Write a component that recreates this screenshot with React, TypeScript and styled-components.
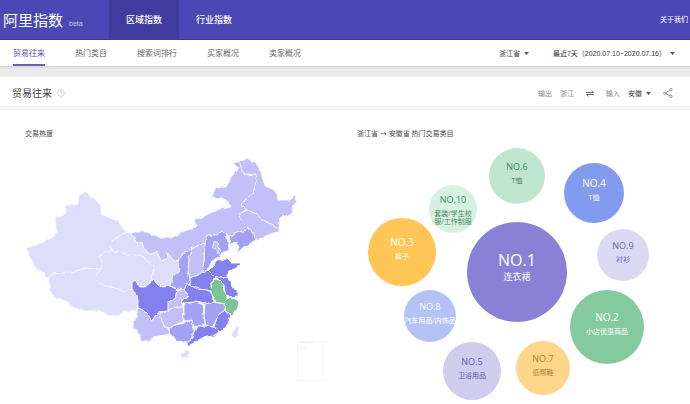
import React from "react";
import styled, { createGlobalStyle } from "styled-components";

const GlobalStyle = createGlobalStyle`
  * { box-sizing: border-box; }
  body {
    margin: 0;
    background: #fff;
    color: #444;
    font-family: "Open Sans", "Noto Sans CJK SC", sans-serif;
    font-size: 7px;
  }
  a { color: inherit; text-decoration: none; }
`;

const TopBar = styled.header`
  display: flex;
  align-items: stretch;
  height: 40px;
  background: #4b48b6;
  border-bottom: 1px solid #403c9c;
  color: #fff;
`;

const Logo = styled.a`
  display: flex;
  align-items: baseline;
  gap: 6px;
  width: 109px;
  padding: 0 0 0 3px;
  font-size: 15px;
  line-height: 41px;
  white-space: nowrap;
`;

const Beta = styled.small`
  color: #c5c3ee;
  font-family: "Liberation Sans", sans-serif;
  font-size: 7px;
`;

const MainNav = styled.nav`
  display: flex;
  flex: 1;
`;

const MainTab = styled.a<{ $active?: boolean }>`
  width: 70px;
  line-height: 39px;
  font-size: 9px;
  font-weight: 500;
  text-align: center;
  background: ${(p) => (p.$active ? "#403c9e" : "transparent")};
`;

const About = styled.a`
  padding-right: 2px;
  line-height: 39px;
`;

const SubBar = styled.div`
  display: flex;
  justify-content: space-between;
  height: 26px;
  padding: 0 15px 0 13px;
  background: #fff;
`;

const SubNav = styled.nav`
  display: flex;
  gap: 30px;
`;

const SubTab = styled.a<{ $active?: boolean }>`
  height: 26px;
  line-height: 25px;
  font-size: 8px;
  color: ${(p) => (p.$active ? "#5b54b4" : "#666")};
  border-bottom: 2px solid ${(p) => (p.$active ? "#6a63ae" : "transparent")};
`;

const Filters = styled.div`
  display: flex;
  align-items: center;
  gap: 24px;
  font-family: "Liberation Sans", "Noto Sans CJK SC", sans-serif;
`;

const SelectBox = styled.span`
  display: inline-flex;
  align-items: center;
  gap: 4px;
`;

const Select = styled.select`
  appearance: none;
  field-sizing: content;
  margin: 0;
  padding: 0;
  border: 0;
  background: transparent;
  color: #333;
  font: inherit;
`;

const Band = styled.div`
  height: 11px;
  background: linear-gradient(#d6d6d6, #ebebeb 3px);
`;

const TitleBar = styled.div`
  display: flex;
  align-items: center;
  justify-content: space-between;
  height: 33px;
  padding: 0 17px 0 12px;
  background: linear-gradient(#fff 29px, #efefef 29px, #efefef 30px, #fbfbfb 30px);
  border-bottom: 1px solid #f1f1f1;
`;

const TitleGroup = styled.div`
  display: flex;
  align-items: center;
  gap: 5px;
`;

const Title = styled.h1`
  margin: 0;
  font-size: 10px;
  line-height: 33px;
  font-weight: 400;
  color: #444;
`;

const Trade = styled.div`
  display: flex;
  align-items: center;
  gap: 12px;
  color: #888;
`;

const Pair = styled.span`
  display: inline-flex;
  align-items: center;
  gap: 8px;
`;

const IconButton = styled.button`
  display: inline-flex;
  margin: 0;
  padding: 0;
  border: 0;
  background: transparent;
  color: #444;
`;

const Board = styled.main`
  display: grid;
  grid-template-columns: 1fr 1fr;
  padding-top: 18px;
`;

const Panel = styled.section`
  min-width: 0;
`;

const PanelTitle = styled.h2<{ $inset: number }>`
  margin: 0;
  padding-left: ${(p) => p.$inset}px;
  font-size: 7px;
  line-height: 12px;
  font-weight: 400;
  color: #444;
`;

const Chart = styled.svg`
  display: block;
  width: 100%;
  height: auto;
`;

const Rank = styled.text<{ $size: number }>`
  font-size: ${(p) => p.$size}px;
  text-anchor: middle;
`;

function Caret() {
  return (
    <svg width="5" height="3" viewBox="0 0 5 3" aria-hidden="true">
      <path d="M0 0h5L2.5 3z" fill="#555" />
    </svg>
  );
}

function Picker({ label, value }: { label: string; value: string }) {
  return (
    <SelectBox>
      <Select aria-label={label} defaultValue={value}>
        <option>{value}</option>
      </Select>
      <Caret />
    </SelectBox>
  );
}

const TONES = {
  faint: "#dedefb",
  light: "#c1c0f8",
  mid: "#a3a1f4",
  strong: "#8481ee",
  chosen: "#7dc495",
};

const REGIONS: { id: string; tone: keyof typeof TONES; points: string }[] = [
  { id: "xinjiang", tone: "faint", points: "26,250 30,246 35,246 40,243 46,241 54,237 56,231 56,225 55,218 63,216 66,211 66,205 73,205 78,204 79,196 85,190 90,196 96,200 101,206 101,215 110,218 118,221 124,230 127,232 118,237 113,240 110,248 111,251 105,252 99,256 102,261 101,269 96,268 83,269 73,272 53,274 48,277 43,273 35,267 31,258" },
  { id: "xizang", tone: "faint", points: "48,277 53,274 73,272 83,269 96,268 101,269 96,275 98,282 106,286 116,288 126,292 132,288 135,293 138,300 137,310 131,311 123,311 120,315 110,316 98,310 86,311 75,309 66,301 56,298 49,291 50,283" },
  { id: "qinghai", tone: "faint", points: "101,269 102,261 99,256 105,252 113,250 121,252 128,255 140,255 148,261 154,266 153,275 150,283 145,287 139,286 135,281 132,282 132,288 126,292 116,288 106,286 98,282 96,275" },
  { id: "gansu", tone: "faint", points: "127,232 131,232 136,242 142,243 145,250 151,254 157,251 160,259 166,260 168,253 171,258 178,263 180,270 173,276 170,286 163,287 156,283 154,281 150,283 153,275 154,266 148,261 140,255 128,255 121,252 111,251 110,248 113,240 118,237" },
  { id: "neimenggu", tone: "light", points: "131,232 146,232 160,237 173,237 185,231 196,227 194,219 201,218 216,210 230,207 228,201 221,198 212,197 216,187 226,187 231,178 238,168 233,163 240,161 241,168 245,175 256,174 257,180 253,193 245,200 242,205 247,210 240,213 241,221 246,226 250,229 240,232 229,236 226,233 221,231 217,235 208,235 205,243 193,248 180,256 176,262 171,258 168,253 166,260 160,259 157,251 151,254 145,250 142,243 136,242" },
  { id: "heilongjiang", tone: "light", points: "240,161 248,159 256,163 261,173 265,186 276,191 278,200 290,200 296,195 295,203 290,215 280,217 279,228 273,225 263,220 256,214 247,210 242,205 245,200 253,193 257,180 256,174 245,175 241,168" },
  { id: "jilin", tone: "light", points: "247,210 256,214 263,220 273,225 279,228 279,231 271,234 263,237 256,240 252,230 246,226 241,221 240,213" },
  { id: "liaoning", tone: "mid", points: "250,229 252,230 256,240 246,246 237,253 239,247 236,243 230,245 229,236 240,232" },
  { id: "hebei", tone: "mid", points: "208,235 217,235 221,231 226,233 228,242 229,250 223,253 218,257 211,262 208,270 202,273 204,260 205,243" },
  { id: "beijing", tone: "light", points: "212,248 214,243 218,242 219,247 221,252 218,254 216,249" },
  { id: "shanxi", tone: "light", points: "193,248 205,243 204,260 202,273 190,278 188,272 189,258" },
  { id: "shaanxi", tone: "mid", points: "178,263 180,256 193,248 189,258 188,272 190,278 190,285 186,285 184,290 178,289 170,286 173,276 180,270" },
  { id: "shandong", tone: "strong", points: "211,268 218,260 228,259 231,263 242,263 238,267 230,271 226,277 215,277 208,271" },
  { id: "henan", tone: "strong", points: "190,278 202,273 208,270 215,277 211,283 212,292 206,290 198,289 190,285" },
  { id: "jiangsu", tone: "strong", points: "215,277 226,277 230,281 235,290 238,292 238,296 230,297 225,293 224,285 219,280" },
  { id: "anhui", tone: "chosen", points: "215,279 219,280 223,284 224,291 227,295 227,300 224,304 216,302 212,296 211,283" },
  { id: "zhejiang", tone: "chosen", points: "227,299 231,297 239,301 237,310 231,315 226,310 224,304" },
  { id: "hubei", tone: "strong", points: "184,290 186,285 190,285 198,289 206,290 212,292 212,296 214,302 205,304 196,302 183,303 181,300 188,297" },
  { id: "chongqing", tone: "light", points: "178,290 184,290 188,297 181,300 183,306 180,308 174,307 168,310 168,302 176,298" },
  { id: "sichuan", tone: "strong", points: "132,282 135,281 139,287 145,287 150,283 154,280 156,283 163,287 170,286 178,290 176,298 168,302 168,311 160,312 156,315 152,321 148,315 143,310 138,308 138,300 135,293 132,288" },
  { id: "yunnan", tone: "light", points: "138,308 143,310 148,315 152,321 156,315 160,312 162,321 166,327 170,334 160,336 153,337 149,343 141,340 138,331 132,328 135,320" },
  { id: "guizhou", tone: "light", points: "162,321 160,314 168,311 174,307 180,308 183,306 184,321 170,327 165,327" },
  { id: "guangxi", tone: "mid", points: "169,327 184,323 192,320 194,327 194,332 190,341 186,343 177,341 170,334" },
  { id: "hunan", tone: "mid", points: "184,304 196,302 203,305 205,324 194,327 192,320 184,321" },
  { id: "jiangxi", tone: "mid", points: "205,304 214,302 224,304 225,310 218,315 214,327 206,327 204,316" },
  { id: "fujian", tone: "strong", points: "225,310 231,315 227,325 220,332 214,327 218,315" },
  { id: "guangdong", tone: "strong", points: "197,326 205,326 214,327 219,332 213,336 202,338 190,345 188,349 187,343 191,340 194,332" },
  { id: "hainan", tone: "faint", points: "181,355 186,351 190,352 187,357 183,358" },
  { id: "taiwan", tone: "faint", points: "236,327 239,328 236,339 232,336" },
];

function HeatMap() {
  return (
    <Chart viewBox="0 140 345 260" role="img" aria-label="交易热度">
      <defs>
        <filter id="coast" x="-2%" y="-2%" width="104%" height="104%">
          <feTurbulence type="fractalNoise" baseFrequency="0.2" numOctaves="1" seed="4" result="noise" />
          <feDisplacementMap in="SourceGraphic" in2="noise" scale="4" xChannelSelector="R" yChannelSelector="G" />
        </filter>
      </defs>
      <g filter="url(#coast)" stroke="#f4f4fe" strokeWidth="1" strokeLinejoin="round">
        {REGIONS.map((r) => (
          <polygon key={r.id} points={r.points} fill={TONES[r.tone]} />
        ))}
      </g>
      <g fill="none" stroke="#f6f6f6">
        <rect x="297.5" y="341.5" width="26" height="39" />
        <path d="M299 342l8 1 8-1M302 349l4-2" stroke="#ececec" />
      </g>
    </Chart>
  );
}

type Bubble = {
  rank: number;
  cx: number;
  cy: number;
  r: number;
  size: number;
  fill: string;
  ink: string;
  lines: string[];
};

const BUBBLES: Bubble[] = [
  { rank: 1, cx: 517, cy: 272, r: 50, size: 16, fill: "#8a81d6", ink: "#fff", lines: ["连衣裙"] },
  { rank: 2, cx: 607, cy: 327, r: 37, size: 10, fill: "#84ca9c", ink: "#fff", lines: ["小店优惠商品"] },
  { rank: 3, cx: 402, cy: 252, r: 34, size: 10, fill: "#fec557", ink: "#fff", lines: ["裤子"] },
  { rank: 4, cx: 594, cy: 193, r: 30, size: 10, fill: "#829bee", ink: "#fff", lines: ["T恤"] },
  { rank: 5, cx: 472, cy: 371, r: 29, size: 9, fill: "#cfccee", ink: "#6259ab", lines: ["卫浴用品"] },
  { rank: 6, cx: 517, cy: 176, r: 28, size: 9, fill: "#c0e6d0", ink: "#3f8560", lines: ["T恤"] },
  { rank: 7, cx: 543, cy: 368, r: 27, size: 9, fill: "#fed68a", ink: "#a98238", lines: ["低帮鞋"] },
  { rank: 8, cx: 430, cy: 316, r: 26, size: 9, fill: "#b4c2f6", ink: "#fff", lines: ["汽车用品/内饰品"] },
  { rank: 9, cx: 623, cy: 255, r: 26, size: 9, fill: "#dbd9f3", ink: "#6c65ab", lines: ["衬衫"] },
  { rank: 10, cx: 453, cy: 209, r: 24, size: 9, fill: "#d8f0e2", ink: "#3f8a60", lines: ["套装/学生校", "服/工作制服"] },
];

function BubbleChart() {
  return (
    <Chart viewBox="345 140 345 260" overflow="visible" role="img" aria-label="热门交易类目">
      {BUBBLES.map((b) => (
        <g key={b.rank} fill={b.ink}>
          <circle cx={b.cx} cy={b.cy} r={b.r} fill={b.fill} />
          <Rank $size={b.size} x={b.cx} y={b.cy - 6}>
            NO.{b.rank}
          </Rank>
          {b.lines.map((line, i) => (
            <Rank key={line} $size={b.rank === 1 ? 9 : 7} x={b.cx} y={b.cy + (b.rank === 1 ? 8 : 7) + i * 8}>
              {line}
            </Rank>
          ))}
        </g>
      ))}
    </Chart>
  );
}

export default function App() {
  return (
    <>
      <GlobalStyle />
      <TopBar>
        <Logo href="#">
          阿里指数<Beta>beta</Beta>
        </Logo>
        <MainNav>
          <MainTab href="#region" $active>区域指数</MainTab>
          <MainTab href="#industry">行业指数</MainTab>
        </MainNav>
        <About href="#about">关于我们</About>
      </TopBar>
      <SubBar>
        <SubNav>
          <SubTab href="#trade" $active>贸易往来</SubTab>
          <SubTab href="#hot">热门类目</SubTab>
          <SubTab href="#search">搜索词排行</SubTab>
          <SubTab href="#buyers">买家概况</SubTab>
          <SubTab href="#sellers">卖家概况</SubTab>
        </SubNav>
        <Filters>
          <Picker label="省份" value="浙江省" />
          <Picker label="时间" value="最近7天（2020.07.10~2020.07.16）" />
        </Filters>
      </SubBar>
      <Band />
      <TitleBar>
        <TitleGroup>
          <Title>贸易往来</Title>
          <svg width="8" height="8" viewBox="0 0 8 8" fill="none" stroke="#c8c8c8" aria-hidden="true">
            <circle cx="4" cy="4" r="3.4" strokeWidth=".7" />
            <path d="M3 3.2a1 1 0 1 1 1.4.9q-.4.2-.4.7M4 5.500v.5" strokeWidth=".7" />
          </svg>
        </TitleGroup>
        <Trade>
          <Pair>
            <span>输出</span>
            <span>浙江</span>
          </Pair>
          <IconButton aria-label="互换">
            <svg width="8" height="7" viewBox="0 0 8 7" fill="none" stroke="currentColor">
              <path d="M0 2.500h7.500L5.500.7M8 4.500H.5l2 1.800" strokeWidth=".8" />
            </svg>
          </IconButton>
          <Pair>
            <span>输入</span>
            <Picker label="输入省份" value="安徽" />
          </Pair>
          <IconButton aria-label="分享">
            <svg width="10" height="10" viewBox="0 0 10 10" fill="none" stroke="#888" strokeWidth=".9">
              <circle cx="1.8" cy="5.2" r="1.200" />
              <circle cx="8" cy="1.7" r="1.200" />
              <circle cx="8" cy="8.3" r="1.200" />
              <path d="M2.900 4.600l4-2.300M2.900 5.800l4 2" />
            </svg>
          </IconButton>
        </Trade>
      </TitleBar>
      <Board>
        <Panel>
          <PanelTitle $inset={25}>交易热度</PanelTitle>
          <HeatMap />
        </Panel>
        <Panel>
          <PanelTitle $inset={12}>浙江省 → 安徽省 热门交易类目</PanelTitle>
          <BubbleChart />
        </Panel>
      </Board>
    </>
  );
}
